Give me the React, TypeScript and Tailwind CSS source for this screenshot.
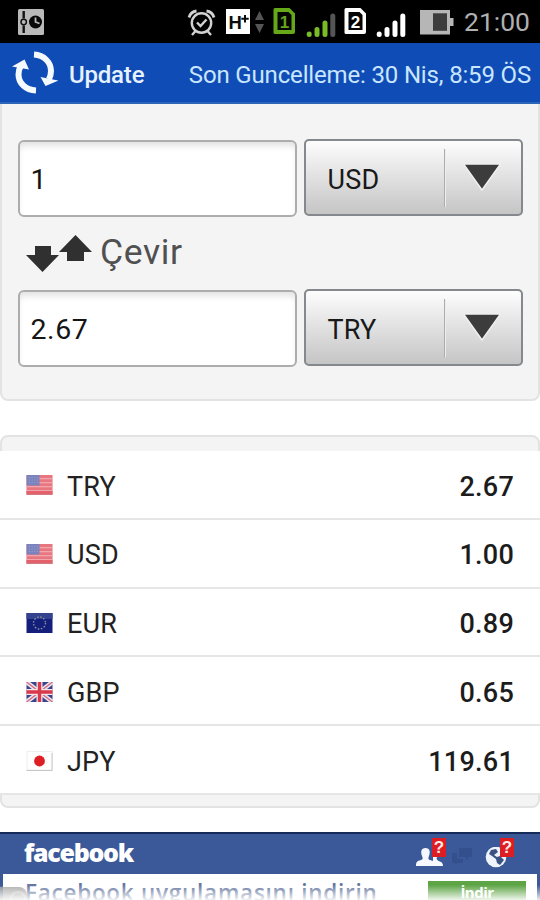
import type { ReactNode } from 'react';

interface Rate {
  code: string;
  value: string;
  flag: 'us' | 'eu' | 'gb' | 'jp';
}

const rates: Rate[] = [
  { code: 'TRY', value: '2.67', flag: 'us' },
  { code: 'USD', value: '1.00', flag: 'us' },
  { code: 'EUR', value: '0.89', flag: 'eu' },
  { code: 'GBP', value: '0.65', flag: 'gb' },
  { code: 'JPY', value: '119.61', flag: 'jp' },
];

function Flag({ country }: { country: Rate['flag'] }) {
  return (
    <svg width="28" height="20" viewBox="0 0 28 20" className="shrink-0">
      {country === 'us' && (
        <>
          <rect x="0.5" width="26" height="20" fill="#e8767f" />
          {[3, 7, 11, 15].map((y) => (
            <rect key={y} x="0.5" y={y} width="26" height="1.3" fill="#f0a6ac" />
          ))}
          <rect x="0.5" y="16" width="26" height="3" fill="#e4606a" />
          <rect x="0.5" width="13" height="10.5" fill="#7a83bd" />
          {[2, 4.5, 7].map((y) => (
            <path key={y} d={`M3 ${y + 0.5}h9`} stroke="#949cca" strokeDasharray="1.2 1.4" />
          ))}
          <rect x="0.5" y="18.8" width="26" height="1" fill="#cf7880" />
        </>
      )}
      {country === 'eu' && (
        <>
          <rect x="0.5" width="26" height="20" fill="#141f7c" />
          <rect x="0.5" width="26" height="6" fill="#35438f" />
          <circle cx="13.5" cy="10" r="6" fill="none" stroke="#8790a0" strokeWidth="1.4" strokeDasharray="1.5 1.64" />
        </>
      )}
      {country === 'gb' && (
        <>
          <rect x="0.5" width="26" height="20" fill="#3d4287" />
          <path d="M0.5 0l26 20M26.5 0L0.5 20" stroke="#e9e3ef" strokeWidth="4.4" />
          <path d="M0.5 0l26 20M26.5 0L0.5 20" stroke="#d67080" strokeWidth="1.4" />
          <path d="M13.5 0v20M0.5 10h26" stroke="#f2e6ec" strokeWidth="6" />
          <path d="M13.5 0v20M0.5 10h26" stroke="#d93a4b" strokeWidth="3.4" />
        </>
      )}
      {country === 'jp' && (
        <>
          <rect x="1" y="0.5" width="25" height="18.5" fill="#fefefe" stroke="#f0eeee" />
          <path d="M0.5 19.5h26M26.1 2v17" stroke="#c9c6c6" strokeWidth="1" />
          <circle cx="13.5" cy="10" r="5.4" fill="#dd1f24" />
        </>
      )}
    </svg>
  );
}

function SimCard({ label, color, textColor }: { label: string; color: string; textColor: string }) {
  return (
    <svg width="23" height="28" viewBox="0 0 23 28">
      <path d="M2 1h14.5L22 6.5V25a2 2 0 0 1-2 2H2a1.5 1.5 0 0 1-1.5-1.5V2.5A1.5 1.5 0 0 1 2 1z" fill={color} />
      <path d="M4.500 5h11l3 3V23H4.500z" fill="#050505" />
      <text x="11.500" y="20.500" textAnchor="middle" fontFamily="Liberation Sans, sans-serif" fontWeight="700" fontSize="17" fill={textColor}>
        {label}
      </text>
    </svg>
  );
}

function Signal({ color, lastColor }: { color: string; lastColor: string }) {
  return (
    <svg width="30" height="26" viewBox="0 0 30 26" strokeWidth="5" strokeLinecap="round">
      <path d="M3.200 22v.5M11 17.500v5M19 11v11.500" stroke={color} />
      <path d="M26.800 4v18.500" stroke={lastColor} />
    </svg>
  );
}

function StatusBar() {
  return (
    <div className="flex h-[43px] items-start bg-black">
      <svg className="mt-[9px] ml-[18px]" width="26" height="26" viewBox="0 0 26 26">
        <rect width="26" height="26" rx="1.5" fill="#b9b9b9" />
        <path d="M5.700 2v7.500M5.700 16.500V24" stroke="#111" strokeWidth="2.400" />
        <circle cx="5.700" cy="13" r="2.700" fill="none" stroke="#111" strokeWidth="1.500" />
        <circle cx="17.500" cy="13" r="6.500" fill="#080808" />
        <path d="M17.500 8.500V13l4 1.500" fill="none" stroke="#b9b9b9" strokeWidth="1.800" />
      </svg>
      <svg className="mt-[9px] ml-[143px]" width="29" height="27" viewBox="0 0 29 27" fill="none" stroke="#d2d2d2" strokeWidth="2.400">
        <circle cx="14.500" cy="14" r="9.700" />
        <path d="M10 13.500l3.500 3.500 6-6.500M8.500 22l-3.500 4M20.500 22l3.500 4" />
        <path d="M2 8.500C3 5 5.500 2.500 9.500 2M27 8.500C26 5 23.500 2.500 19.500 2" strokeWidth="2.800" />
      </svg>
      <svg className="mt-[9px] ml-[10px] bg-white" width="24" height="25" viewBox="0 0 24 25">
        <text x="2.500" y="19.500" fontFamily="Liberation Sans, sans-serif" fontWeight="700" fontSize="18.500" fill="#0c0c0c">H</text>
        <path d="M19 6v7.500M15.300 9.700h7.400" stroke="#0c0c0c" strokeWidth="2" />
      </svg>
      <svg className="mt-[11px] ml-[5px]" width="9" height="22" viewBox="0 0 9 22" fill="#555">
        <path d="M4.500 0L9 9H0zM0 13h9l-4.500 9z" />
      </svg>
      <div className="mt-[7px] ml-[9px]">
        <SimCard label="1" color="#65a818" textColor="#65a818" />
      </div>
      <div className="mt-3 ml-[10px]">
        <Signal color="#79bd26" lastColor="#555" />
      </div>
      <div className="mt-[7px] ml-[8px]">
        <SimCard label="2" color="#fff" textColor="#fff" />
      </div>
      <div className="mt-3 ml-[9px]">
        <Signal color="#fff" lastColor="#fff" />
      </div>
      <svg className="mt-[10px] ml-[14px]" width="34" height="25" viewBox="0 0 34 25">
        <path d="M0 0h30v8h3.500v8H30v8.500H0z" fill="#b6b6b6" />
        <rect x="13" y="3.300" width="14" height="17.500" fill="#3c3c3c" />
      </svg>
      <span className="mt-[6px] ml-[10px] text-[26.500px] leading-8 text-[#b0b0b0]">21:00</span>
    </div>
  );
}

function Header() {
  return (
    <div className="flex h-[61px] items-center border-b-2 border-[#2c66b8] bg-[#104cb6] text-[#e6f2ff]">
      <svg className="ml-3" width="46" height="44" viewBox="0 0 46 44">
        <path d="M22 3.500C32 4 39 11.500 39 20c0 3-.8 6-2.200 8.500" fill="none" stroke="#f5faff" strokeWidth="6" />
        <path d="M28.500 26l5 9 13-5.500z" fill="#f5faff" />
        <path d="M24 39.500C13.500 39 6.500 32 6.500 23.500c0-3 .8-6 2.200-8.500" fill="none" stroke="#f5faff" strokeWidth="6" />
        <path d="M0 15.500l12.500-7L17 18.500z" fill="#f5faff" />
      </svg>
      <span className="ml-[11px] pt-[4px] text-[24px] font-medium tracking-[-0.200px]">Update</span>
      <span className="ml-auto pt-[4px] pr-[9px] text-[24px] tracking-[-0.160px] text-[#c9e6ff]">
        Son Guncelleme: 30 Nis, 8:59 ÖS
      </span>
    </div>
  );
}

function AmountRow({ amount, currency }: { amount: string; currency: string }) {
  return (
    <div className="flex h-[78px] items-start gap-[7px] pr-[15px] pl-[16px]">
      <div className="mt-px flex h-[77px] w-[280px] items-center rounded-[6px] border-2 border-[#adadad] bg-white pt-[4px] pl-[10.500px] text-[28.500px] tracking-[0.600px] text-[#151515] shadow-[inset_0_6px_6px_-2px_#e3e3e3]">
        {amount}
      </div>
      <div className="flex h-[77px] w-[219px] items-center rounded-[5px] border-2 border-[#85888c] bg-linear-to-b from-[#fdfdfd] to-[#c5c5c5]">
        <span className="flex-1 pt-[5px] pl-[21px] text-[27px] tracking-[0.200px] text-[#191919]">{currency}</span>
        <span className="mr-[17px] h-[58px] w-0.5 border-r border-l border-r-[#eee] border-l-[#acacac]" />
        <svg className="mr-[20px] mb-0.5" width="38" height="28" viewBox="0 0 38 28">
          <path d="M0.500 1h37L19 27z" fill="#3c3c3c" stroke="#f0f0f0" strokeWidth="1.500" />
        </svg>
      </div>
    </div>
  );
}

function Badge() {
  return (
    <span className="absolute -top-[9px] right-0 flex h-[19px] w-[14px] items-center justify-center bg-[#dc1d22] font-['Liberation_Sans',sans-serif] text-[17px] font-bold text-[#ffe9e9]">
      ?
    </span>
  );
}

function IconWithBadge({ children, className }: { children: ReactNode; className: string }) {
  return (
    <span className={`relative ${className}`}>
      {children}
      <Badge />
    </span>
  );
}

function AdBanner() {
  return (
    <div className="relative h-[68px] overflow-hidden bg-[#3b5998] font-['Open_Sans',sans-serif]">
      <div className="flex h-[42px] items-center border-t-2 border-[#162b59] pl-6">
        <span className="pb-[3px] text-[25px] font-extrabold tracking-[-1.300px] text-white">facebook</span>
        <div className="ml-auto flex items-start pt-[7px]">
          <IconWithBadge className="h-[20px] w-[30px]">
            <svg width="27" height="20" viewBox="0 0 27 20" fill="#f5f8ff">
              <path d="M17 3c4 0 5 3 4 7-.5 2-1 3 4 5 1 .5 2 2 2 4H17z" />
              <path d="M0 19c0-4 1-5 5-6 2-.6 2-2 1-4-1.500-4-1-8 3.500-8s5 4 3.500 8c-1 2-1 3.500 1 4 4 1 5 2 5 6z" />
            </svg>
          </IconWithBadge>
          <svg className="mt-px ml-[6px]" width="22" height="17" viewBox="0 0 22 17" fill="#34508c">
            <path d="M7 0h13v9h-3l-3 4v-4H7zM0 5h5v6h6v4H6l-3 2v-2H0z" />
          </svg>
          <IconWithBadge className="ml-[11px] h-[21px] w-[29px]">
            <svg width="23" height="21" viewBox="0 0 23 21">
              <circle cx="11" cy="10" r="10.300" fill="#eef3fc" />
              <path d="M6 3l5-1 2 3-4 3 3 2 3-1 4 4-4 5-3-2-1-4-4-3-3-2z" fill="#3b5283" />
            </svg>
          </IconWithBadge>
        </div>
        <span className="w-[26px]" />
      </div>
      <div className="mr-[3px] ml-[3px] flex h-[26px] items-start justify-between bg-white pr-[11px] pl-[22px]">
        <span className="text-[22.500px] leading-[38px] font-semibold tracking-[0.740px] text-[#65769f]">
          Facebook uygulamasını indirin
        </span>
        <span className="mt-[7px] flex h-[30px] w-[98px] justify-center bg-[#5da445] text-[15px] leading-[22px] font-bold tracking-[-0.500px] text-white">
          İndir
        </span>
      </div>
      {/* rounded corner of the toolbar peeking in under the banner */}
      <span className="absolute bottom-0 left-0 h-[13px] w-[27px] rounded-tr-lg bg-[#999b99]/80">
        <span className="absolute top-1 left-2.5 size-4 rounded-full border-2 border-[#c5c6c4]" />
      </span>
      <div className="absolute inset-x-0 bottom-0 h-[15px] bg-linear-to-b from-white/0 to-white/90" />
    </div>
  );
}

export default function App() {
  return (
    <div className="h-[900px] w-[540px] overflow-hidden bg-white font-[Roboto,sans-serif]">
      <StatusBar />
      <Header />

      <section className="h-[297px] rounded-b-[8px] border-x-2 border-b-2 border-[#e3e3e3] bg-[#f4f4f4] pt-[35px]">
        <AmountRow amount="1" currency="USD" />
        <div className="flex h-[72px] items-start pl-6">
          <svg className="mt-[18px]" width="66" height="38" viewBox="0 0 66 38" fill="#303030">
            <path d="M9 11h16v9h8L16.500 37 0 20h9zM49.500 0L66 17h-8v9H41v-9h-8z" />
          </svg>
          <span className="mt-[14px] ml-[8px] text-[35.500px] leading-[42px] tracking-[0.600px] text-[#505050]">
            Çevir
          </span>
        </div>
        <AmountRow amount="2.67" currency="TRY" />
      </section>

      <section className="mt-[34px] h-[373px] rounded-[8px] border-2 border-[#e3e3e3] bg-[#f4f4f4]">
        <div className="-mx-0.5 mt-[14px] bg-white">
          {rates.map((rate) => (
            <div
              key={rate.code}
              className="flex h-[68.800px] items-center border-b-2 border-[#e6e6e6] pt-0.5 pr-[26px] pl-[26px] text-[27px] text-[#222]"
            >
              <Flag country={rate.flag} />
              <span className="ml-[13px] pt-[3px] tracking-[0.200px]">{rate.code}</span>
              <span className="ml-auto pt-[3px] text-[27px] font-medium tracking-[0.250px] text-[#1c1c1c]">
                {rate.value}
              </span>
            </div>
          ))}
        </div>
      </section>

      <div className="mt-[24px]">
        <AdBanner />
      </div>
    </div>
  );
}
